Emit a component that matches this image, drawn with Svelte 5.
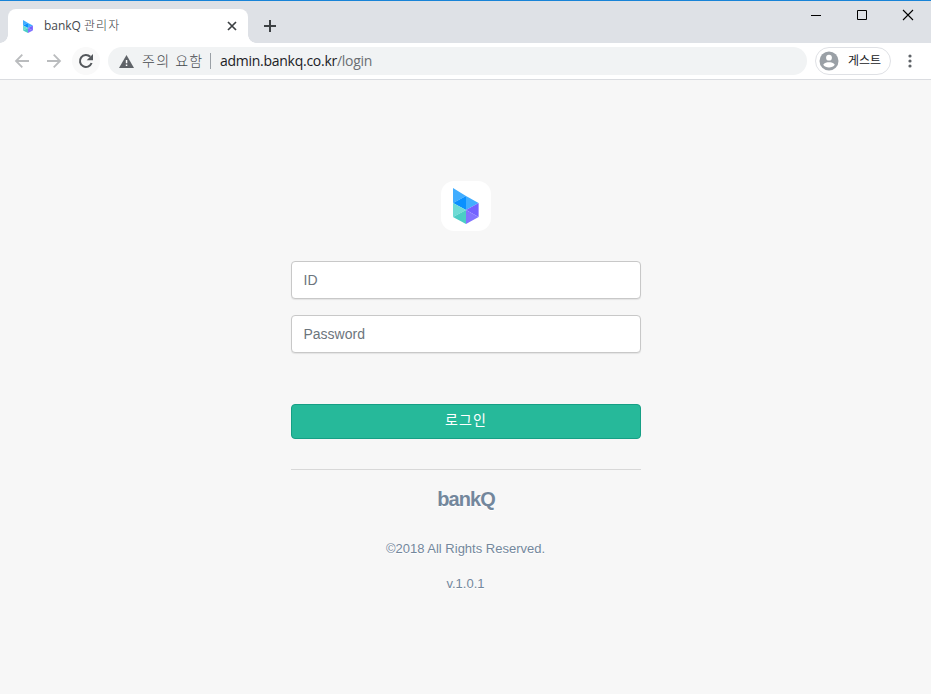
<script>
  let id = $state('');
  let password = $state('');
</script>

{#snippet mark()}
  <polygon points="12,7 25,15 12,22" fill="#41adff" />
  <polygon points="25,15 37.6,22 25,29" fill="#41adff" />
  <polygon points="12,22 25,15 25,29" fill="#0a90ff" />
  <polygon points="12,22 25,29 12,36" fill="#6edbd5" />
  <polygon points="12,36 25,29 25,43" fill="#4bcdc5" />
  <polygon points="25,29 37.6,22 37.6,36" fill="#7361ff" />
  <polygon points="25,29 37.6,36 25,43" fill="#8273ff" />
{/snippet}

<div class="window">
  <header class="tabs">
    <div class="tab">
      <svg class="favicon" width="10" height="13" viewBox="12 7 26 36" preserveAspectRatio="none">{@render mark()}</svg>
      <span class="title"><span class="latin">bankQ</span> <span class="kr">관리자</span></span>
      <svg class="close" width="10" height="10" viewBox="0 0 10 10"><path d="M1 1l8 8M9 1l-8 8" stroke="#3c4043" stroke-width="1.7" /></svg>
    </div>
    <svg class="plus" width="12" height="12" viewBox="0 0 12 12"><path d="M6 0v12M0 6h12" stroke="#3c4043" stroke-width="2" /></svg>
    <div class="controls">
      <svg width="46" height="28" viewBox="0 0 46 28"><path d="M18 14.5h10" stroke="#000" /></svg>
      <svg width="46" height="28" viewBox="0 0 46 28"><path d="M18.5 9.5h9v9h-9z" fill="none" stroke="#000" /></svg>
      <svg width="46" height="28" viewBox="0 0 46 28"><path d="M18 9l10 10M28 9L18 19" stroke="#000" stroke-width="1.1" /></svg>
    </div>
  </header>

  <nav class="toolbar">
    <svg class="nav" width="16" height="16" viewBox="0 0 16 16"><path d="M15 8H2M8.3 1.7L2 8l6.3 6.3" fill="none" stroke="#babcbe" stroke-width="1.8" /></svg>
    <svg class="nav" width="16" height="16" viewBox="0 0 16 16"><path d="M1 8h13M7.7 1.7L14 8l-6.3 6.3" fill="none" stroke="#babcbe" stroke-width="1.8" /></svg>
    <div class="reload">
      <svg width="16" height="16" viewBox="0 0 16 16"><path d="M13.6 10A6 6 0 1 1 12.3 3.8" fill="none" stroke="#54585c" stroke-width="2" /><path d="M15 1v6.3H8.7z" fill="#54585c" /></svg>
    </div>
    <div class="address">
      <svg width="15" height="13" viewBox="0 0 15 13"><path d="M7.5 0L15 13H0z" fill="#5f6368" /><path d="M6.8 5h1.5v3.2H6.8zM6.8 9.5h1.5V11H6.8z" fill="#fff" /></svg>
      <span class="notice">주의 요함</span>
      <i></i>
      <span class="url">admin.bankq.co.kr<em>/login</em></span>
    </div>
    <div class="profile">
      <svg width="20" height="20" viewBox="0 0 20 20"><circle cx="10" cy="10" r="9.5" fill="#9aa0a6" /><circle cx="10" cy="6.7" r="2.9" fill="#fff" /><path d="M4.2 13.7C5.3 11.7 8 11.2 10 11.2s4.7.5 5.8 2.5c-1.2 1.8-3.4 2.8-5.8 2.8s-4.6-1-5.8-2.8z" fill="#fff" /></svg>
      <span>게스트</span>
    </div>
    <svg class="dots" width="4" height="14" viewBox="0 0 4 14"><g fill="#5f6368"><circle cx="2" cy="2" r="1.6" /><circle cx="2" cy="7" r="1.6" /><circle cx="2" cy="12" r="1.6" /></g></svg>
  </nav>

  <main>
    <svg class="logo" width="50" height="50" viewBox="0 0 50 50">{@render mark()}</svg>
    <form onsubmit={(e) => e.preventDefault()}>
      <input type="text" placeholder="ID" bind:value={id} />
      <input type="password" placeholder="Password" bind:value={password} />
      <button type="submit">로그인</button>
    </form>
    <footer>
      <h1>bankQ</h1>
      <p>©2018 All Rights Reserved.</p>
      <p>v.1.0.1</p>
    </footer>
  </main>
</div>

<style>
  :global(body) {
    margin: 0;
  }
  .window {
    box-sizing: border-box;
    width: 931px;
    height: 694px;
    display: flex;
    flex-direction: column;
    overflow: hidden;
    background: #f7f7f7;
    font-family: 'Open Sans', 'Noto Sans CJK KR', sans-serif;
  }
  svg {
    display: block;
    flex: none;
  }
  .tabs {
    box-sizing: border-box;
    height: 43px;
    flex: none;
    display: flex;
    align-items: flex-end;
    padding-left: 8px;
    border-top: 1px solid #1883d7;
    background: #dee1e6;
  }
  .tab {
    position: relative;
    box-sizing: border-box;
    width: 240px;
    height: 34px;
    display: flex;
    align-items: center;
    padding: 0 11px 0 15px;
    border-radius: 8px 8px 0 0;
    background: #fff;
  }
  .tab::before,
  .tab::after {
    content: '';
    position: absolute;
    bottom: 0;
    width: 8px;
    height: 8px;
  }
  .tab::before {
    left: -8px;
    background: radial-gradient(circle at 0 0, transparent 7.5px, #fff 8px);
  }
  .tab::after {
    right: -8px;
    background: radial-gradient(circle at 100% 0, transparent 7.5px, #fff 8px);
  }
  .title {
    flex: 1;
    margin-left: 11px;
    font-size: 12px;
    line-height: 18px;
    color: #45494d;
    white-space: nowrap;
  }
  .latin {
    letter-spacing: -0.05px;
  }
  .kr {
    font-weight: 300;
    color: #33373a;
    letter-spacing: 1.1px;
  }
  .plus {
    margin: 0 0 11px 16px;
  }
  .controls {
    align-self: flex-start;
    display: flex;
    margin-left: auto;
  }
  .toolbar {
    box-sizing: border-box;
    height: 37px;
    flex: none;
    display: flex;
    align-items: center;
    padding-left: 14px;
    border-bottom: 1px solid #dadce0;
    background: #fff;
  }
  .nav {
    margin-right: 16px;
  }
  .reload {
    width: 28px;
    height: 28px;
    margin-left: -6px;
    display: flex;
    align-items: center;
    justify-content: center;
    border-radius: 50%;
    background: #f9f9f9;
  }
  .address {
    box-sizing: border-box;
    width: 699px;
    height: 28px;
    margin-left: 8px;
    padding-left: 10.5px;
    display: flex;
    align-items: center;
    border-radius: 14px;
    background: #f1f3f4;
    font-size: 14px;
    line-height: 20px;
    white-space: nowrap;
  }
  .notice {
    width: 61px;
    margin-left: 8.5px;
    font-weight: 300;
    color: #45494d;
    letter-spacing: 1.25px;
  }
  .address i {
    width: 1px;
    height: 16px;
    margin: 0 9px 0 7px;
    background: #9aa0a6;
  }
  .url {
    color: #202124;
    letter-spacing: -0.27px;
  }
  .url em {
    font-style: normal;
    color: #6b6f73;
  }
  .profile {
    box-sizing: border-box;
    width: 76px;
    height: 28px;
    margin-left: 8px;
    padding-left: 3px;
    display: flex;
    align-items: center;
    border: 1px solid #dfe1e5;
    border-radius: 14px;
    font-size: 12px;
    line-height: 18px;
    color: #202124;
  }
  .profile span {
    margin-left: 9px;
    white-space: nowrap;
  }
  .dots {
    margin-left: 16.5px;
  }
  main {
    width: 350px;
    margin: 101px auto 0;
    padding-left: 1px;
    display: flex;
    flex-direction: column;
    align-items: center;
    font-family: 'Liberation Sans', 'Noto Sans CJK KR', sans-serif;
  }
  .logo {
    border-radius: 13px;
    background: #fff;
  }
  form {
    width: 350px;
    margin-top: 30px;
    display: flex;
    flex-direction: column;
  }
  input {
    box-sizing: border-box;
    width: 350px;
    height: 38px;
    margin: 0 0 16px;
    padding: 6px 11.5px;
    border: 1px solid #c8c8c8;
    border-radius: 4px;
    box-shadow: 0 1px 1px rgba(0, 0, 0, 0.08);
    background: #fff;
    font: 14px 'Liberation Sans', sans-serif;
    color: #495057;
    outline: none;
  }
  input::placeholder {
    color: #6c757d;
    opacity: 1;
  }
  button {
    box-sizing: border-box;
    height: 35px;
    margin: 35px 0 0;
    padding: 0 0 3px;
    border: 1px solid #169f85;
    border-radius: 4px;
    background: #26b99a;
    font: 14px/20px 'Liberation Sans', 'Noto Sans CJK KR', sans-serif;
    letter-spacing: 1.2px;
    color: #fff;
  }
  footer {
    width: 350px;
    margin-top: 30px;
    border-top: 1px solid #d8d8d8;
    text-align: center;
    color: #73879c;
    text-shadow: 0 1px 0 #fff;
  }
  h1 {
    margin: 16px 0 0;
    font-size: 20px;
    line-height: 26px;
    letter-spacing: -0.9px;
  }
  p {
    margin: 27px 1px 0 0;
    font-size: 13px;
    line-height: 20px;
  }
  p + p {
    margin-top: 15px;
  }
</style>
